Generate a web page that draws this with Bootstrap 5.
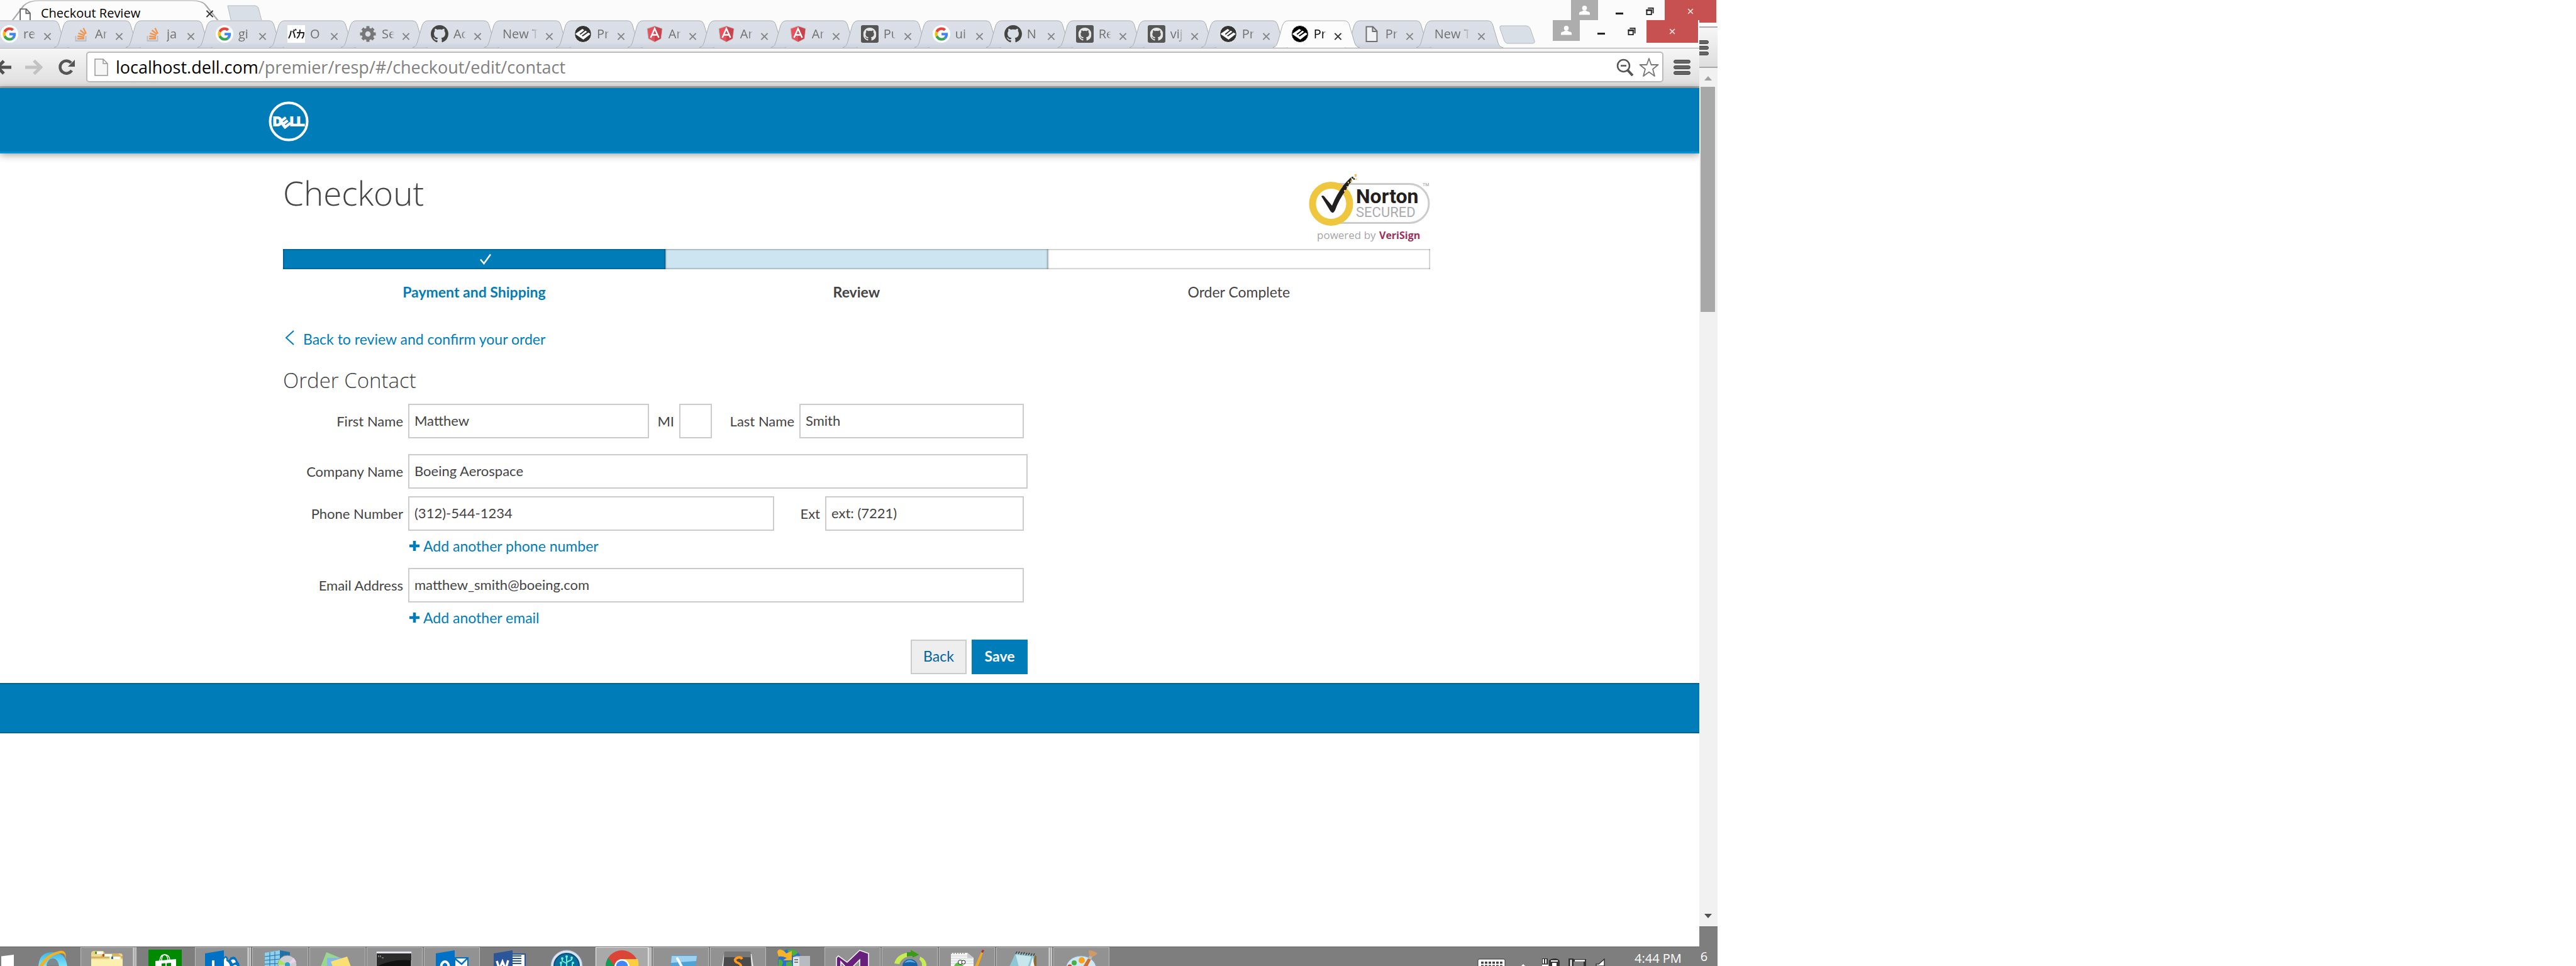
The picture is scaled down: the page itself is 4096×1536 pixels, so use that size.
<!DOCTYPE html>
<html lang="en">
<head>
<meta charset="utf-8">
<meta name="viewport" content="width=device-width, initial-scale=1">
<title>Checkout Review</title>
<link rel="stylesheet" href="https://cdn.jsdelivr.net/npm/bootstrap@5.3.0/dist/css/bootstrap.min.css">
<script src="https://cdn.jsdelivr.net/npm/bootstrap@5.3.0/dist/js/bootstrap.bundle.min.js"></script>
<style>
:root{--dell:#007db8;--ink:#444;--ui:"Open Sans","Noto Sans","Noto Sans CJK JP",sans-serif;--copy:Lato,"Open Sans",sans-serif}
body{background:#fff;color:var(--ink);font-family:var(--copy);font-size:23px;line-height:28px;overflow:hidden}
a{color:var(--dell);text-decoration:none}
svg{display:block;flex:none}
.screen{width:66.67%}
.minw0{min-width:0}
.chrome{font-family:var(--ui);font-size:20px;line-height:28px;color:#000;background:#fbfbfb}
.strip-outer{height:32px;overflow:hidden}
.strip-inner{height:44px}
.tabset{width:88.6%;margin-left:-14px;z-index:0}
.ctab{flex:1 1 0;height:44px;padding:8px 0 0 15px;color:#707070;z-index:0}
.ctab .shape{position:absolute;left:-14px;top:0;width:calc(100% + 24px);height:44px;z-index:-1;fill:url(#tabgrey);stroke:#a9abae}
.ctab.current{color:#000;z-index:2}
.ctab.current .shape{fill:#fcfcfc}
.ctab .label{width:20px;overflow:hidden;white-space:nowrap;margin-left:8px;-webkit-mask-image:linear-gradient(90deg,#000 70%,transparent)}
.ctab .label.wide{width:56px;-webkit-mask-image:linear-gradient(90deg,#000 80%,transparent);margin-left:0}
.ctab .label.full{width:250px;margin-left:12px;-webkit-mask-image:none}
.wbtn,.xbtn{border:0;background:none;padding:0;color:inherit}
.xbtn{margin-left:12px}
.outertab{flex:0 0 350px;margin-left:11px;padding:7px 0 0 16px}
.winctl .person{width:43px;height:33px;background:#adadad;padding:6px 12px}
.winctl .mini{margin-left:28px;padding-top:20px}
.winctl .rest{margin:0 17px 0 36px;padding-top:12px}
.winctl .shut{width:82px;height:36px;background:#c75050;color:#fff;padding:13px 36px;margin-right:2px}
.toolbar{height:64px;background:linear-gradient(#f6f6f6,#dedede);border-top:1px solid #a0a0a0;border-bottom:3px solid #a8a8a8;padding:5px 14px 6px 0}
.omni{height:49px;background:#fff;border:2px solid #bbb;border-radius:5px;padding:0 5px 0 11px;font-size:27px}
.omni .host{color:#000}
.omni .path{color:#808080}
.masthead{height:104px;background:var(--dell);border-bottom:3px solid #0090d4;box-shadow:0 2px 12px rgba(0,0,0,.4);padding:4px 0 0 427px}
.sheet{padding:33px 428px 14px 450px}
.headline{font-family:"Open Sans",sans-serif;font-size:53px;line-height:60px;font-weight:300}
.titlebar{height:119px}
.stepbar{height:32px;box-shadow:inset 0 0 3px rgba(0,0,0,.65)}
.step-done{background:var(--dell);padding-left:36px}
.step-now{background:#cce5f1}
.steplabels{margin-top:22px}
.order-form{max-width:1184px}
.backlink{margin-top:47px}
.subhead{font-family:"Open Sans",sans-serif;font-size:33px;line-height:40px;font-weight:300;margin:32px 0 17px}
.lab{flex:0 0 199px;text-align:right;padding-right:8px;white-space:nowrap;font-size:22px}
.lab-mi{flex-basis:48px}
.lab-last{flex-basis:139px}
.lab-ext{flex-basis:81px}
.form-control.field{height:55px;border:2px solid #ccc;border-radius:0;padding:0 8px 2px;font-size:22px;color:var(--ink);font-family:inherit}
.w-first{flex:0 0 383px}
.w-mi{flex:0 0 52px}
.w-phone{flex:0 0 582px}
.narrow{padding-right:6px}
.under{padding:10px 0 0 201px;margin-bottom:21px}
.under a{gap:6px}
.gap-company{margin:25px 0 12px}
.btn.act{width:89px;height:55px;border-radius:0;padding:0 0 3px;font-size:23px;line-height:28px}
.btn.act-back{background:#eee;border:2px solid #ccc;color:#00639a}
.btn.act-save{background:var(--dell);color:#fff;border:0;font-weight:700}
.footband{height:80px;background:var(--dell);border-top:2px solid #00608e;border-bottom:2px solid #00608e}
.taskbar{height:31px;background:#7e7e7e;border-top:1px solid #666;overflow:hidden;color:#fff;font-family:var(--ui);font-size:20px;line-height:28px;gap:2px}
.task{flex:0 0 89px;height:34px}
.task.open{background:#929292;box-shadow:inset 0 0 0 1px #b9b9b9}
.task.many{border-right:5px double #c8c8c8}
.task.front{background:#a9a9a9;box-shadow:inset 0 0 0 1px #eee}
.clock{margin:4px 28px 0 44px}
.sidestrip{flex:0 0 29px;background:#f1f1f1}
.side-gap{height:6px;background:#fbfbfb}
.side-red{height:4px;margin-right:2px;background:#c75050}
.side-tool{height:66px;background:linear-gradient(#f6f6f6,#dedede);border-top:2px solid #aaa;border-bottom:2px solid #a8a8a8;padding-top:20px;overflow:hidden}
.side-up{height:30px;padding:13px 0 0 8px}
.side-down{padding:0 0 13px 8px}
.thumb{height:358px;margin:0 4px 0 2px;background:#a8a8a8}
.side-task{height:63px;background:#7e7e7e;border-top:1px solid #666;color:#fff;font-family:var(--ui);font-size:20px;line-height:28px;padding:33px 0 0 2px}
</style>
</head>
<body>
<svg width="0" height="0" class="position-absolute" aria-hidden="true">
<defs>
<linearGradient id="tabgrey" x1="0" y1="0" x2="0" y2="1"><stop offset="0" stop-color="#dbe0e8"/><stop offset=".8" stop-color="#dadfe7"/><stop offset="1" stop-color="#ccd2de"/></linearGradient>
<linearGradient id="folder" x1="0" y1="0" x2="0" y2="1"><stop offset="0" stop-color="#e8d088"/><stop offset="1" stop-color="#fbf3b8"/></linearGradient>
<linearGradient id="ieblue" x1="0" y1="0" x2="0" y2="1"><stop offset="0" stop-color="#3fb4e6"/><stop offset="1" stop-color="#7fe6fb"/></linearGradient>
<symbol id="tab" viewBox="0 0 138 44" preserveAspectRatio="none"><path d="M0 43.500C5 42 6 40 8 34L15 9Q18 1 24 1H114Q120 1 122 9L130 36Q132 43 138 43.500"/></symbol>
<symbol id="cross" viewBox="0 0 14 14"><path d="M1.500 1.500L12.500 12.500M12.500 1.500L1.500 12.500" stroke="currentColor" stroke-width="2.200" opacity=".8"/></symbol>
<symbol id="goog" viewBox="0 0 28 28"><circle cx="14" cy="14" r="14" fill="#fff"/><g transform="translate(3.500 3.500) scale(.44)"><path fill="#EA4335" d="M24 9.500c3.540 0 6.710 1.220 9.210 3.600l6.850-6.850C35.900 2.380 30.470 0 24 0 14.620 0 6.510 5.380 2.560 13.220l7.980 6.190C12.430 13.720 17.740 9.500 24 9.500z"/><path fill="#4285F4" d="M46.980 24.550c0-1.570-.15-3.090-.38-4.550H24v9.020h12.940c-.58 2.960-2.260 5.480-4.780 7.180l7.730 6c4.510-4.180 7.090-10.360 7.090-17.650z"/><path fill="#FBBC05" d="M10.530 28.590c-.48-1.450-.76-2.990-.76-4.590s.27-3.140.76-4.590l-7.980-6.190C.92 16.460 0 20.120 0 24c0 3.880.92 7.540 2.560 10.780l7.970-6.190z"/><path fill="#34A853" d="M24 48c6.480 0 11.930-2.130 15.890-5.810l-7.730-6c-2.150 1.450-4.920 2.300-8.160 2.300-6.260 0-11.570-4.220-13.470-9.910l-7.980 6.190C6.510 42.620 14.620 48 24 48z"/></g></symbol>
<symbol id="stack" viewBox="0 0 28 28"><path d="M5.500 17V25H21.500V17" fill="none" stroke="#babec4" stroke-width="2"/><path d="M8 21.500H19M8.300 17.500L19 19M9.500 12.800L19.500 16.400M12.500 8L20.500 14.400M17.500 4.500L22 13.500" stroke="#f0944d" stroke-width="2.300"/></symbol>
<symbol id="gear" viewBox="0 0 28 28"><circle cx="14" cy="14" r="7" fill="none" stroke="#777" stroke-width="5.500"/><path d="M14 1.500V6M14 22V26.500M1.500 14H6M22 14H26.500M5.200 5.200L8.400 8.400M19.600 19.600L22.800 22.800M22.800 5.200L19.600 8.400M8.400 19.600L5.200 22.800" stroke="#777" stroke-width="5"/></symbol>
<symbol id="octo" viewBox="0 0 16 16"><path d="M8 0C3.580 0 0 3.580 0 8c0 3.540 2.290 6.530 5.470 7.590.4.070.55-.17.55-.38 0-.19-.01-.82-.01-1.490-2.010.37-2.530-.49-2.690-.94-.09-.23-.48-.94-.82-1.130-.28-.15-.68-.52-.01-.53.63-.01 1.080.58 1.230.82.72 1.210 1.870.87 2.330.66.07-.52.28-.87.51-1.070-1.780-.2-3.640-.89-3.640-3.950 0-.87.31-1.590.82-2.150-.08-.2-.36-1.020.08-2.120 0 0 .67-.21 2.200.82.64-.18 1.320-.27 2-.27.68 0 1.360.09 2 .27 1.530-1.040 2.200-.82 2.200-.82.44 1.100.16 1.920.08 2.120.51.56.82 1.270.82 2.150 0 3.070-1.870 3.750-3.650 3.950.29.25.54.73.54 1.480 0 1.070-.01 1.930-.01 2.200 0 .21.15.46.55.38A8.010 8.010 0 0 0 16 8c0-4.420-3.580-8-8-8z" fill="currentColor"/></symbol>
<symbol id="octosq" viewBox="0 0 28 28"><rect width="28" height="28" rx="3" fill="#555"/><svg x="3.500" y="4" width="21" height="21" color="#e6e6e6"><use href="#octo"/></svg></symbol>
<symbol id="ediam" viewBox="0 0 28 28"><circle cx="14" cy="14" r="13.500" fill="currentColor" stroke="#fff"/><path d="M1.500 14L13 6L16 8L8.500 14L10 15.200L18 8.800L20.500 10.500L12 16.800L13.500 18L22.500 11.800L26 14L14.500 23Z" fill="#fff"/></symbol>
<symbol id="ang" viewBox="0 0 28 28"><path d="M14 1.500L26 5.500L24 21.500L14 26.800L4 21.500L2 5.500Z" fill="#e8505b" stroke="#bbb"/><path d="M14 2V26.300L23.600 21.200L25.400 6Z" fill="#c9434d"/><path d="M7.500 20L14 5.500L20.500 20M10 15.500H18" fill="none" stroke="#fff" stroke-width="2.400"/></symbol>
<symbol id="page" viewBox="0 0 28 28"><path d="M5.500 2.500H16L22.500 9.500V26H5.500ZM15.500 3V10H22" fill="#fff" fill-opacity=".6" stroke="currentColor" stroke-width="2"/></symbol>
<symbol id="user" viewBox="0 0 20 16" preserveAspectRatio="none"><circle cx="10" cy="4" r="4" fill="#fff"/><path d="M1 15.500V12Q2 10 6 9.500L8 8H12L14 9.500Q18 10 19 12V15.500Z" fill="#fff"/></symbol>
<symbol id="bars" viewBox="0 0 27 24"><g fill="#666" stroke="#444"><rect x=".5" y=".5" width="26" height="5" rx="2.500"/><rect x=".5" y="9.500" width="26" height="5" rx="2.500"/><rect x=".5" y="18.500" width="26" height="5" rx="2.500"/></g></symbol>
<symbol id="restore" viewBox="0 0 13 13"><path d="M3 0H13V10H11V2H3Z" fill="#222"/><path d="M1 4.500H9V12H1Z" fill="none" stroke="#222" stroke-width="2"/><path d="M0 3H10V6H0Z" fill="#222"/></symbol>
<symbol id="plus" viewBox="0 0 16 16"><path d="M8 0V16M0 8H16" stroke="#007db8" stroke-width="4.500"/></symbol>
</defs>
</svg>

<div class="screen vh-100 d-flex flex-column">
  <header class="chrome strip-outer d-flex">
    <div class="ctab current outertab position-relative d-flex align-items-start">
      <svg class="shape"><use href="#tab"/></svg>
      <svg width="26" height="28" color="#666" class="mt-1"><use href="#page"/></svg>
      <span class="label full">Checkout Review</span>
      <button class="xbtn ms-2 ps-1" aria-label="Close tab"><svg width="13" height="30"><use href="#cross"/></svg></button>
    </div>
    <svg width="57" height="32" class="mt-2"><path d="M1 1H45Q49 2 50 5L57 32H11Q8 31 7 27Z" fill="#d9dfe7" stroke="#b5b8bc"/></svg>
    <div class="winctl ms-auto d-flex align-items-start">
      <button class="wbtn person" aria-label="Profile"><svg width="19" height="15"><use href="#user"/></svg></button>
      <button class="wbtn mini" aria-label="Minimize"><svg width="12" height="3"><path d="M0 0H12V3H0Z" fill="#222"/></svg></button>
      <button class="wbtn rest" aria-label="Restore"><svg width="13" height="12"><use href="#restore"/></svg></button>
      <button class="wbtn shut" aria-label="Close"><svg width="10" height="10"><use href="#cross"/></svg></button>
    </div>
  </header>

  <div class="d-flex flex-grow-1">
    <div class="flex-grow-1 minw0 d-flex flex-column">
      <div class="chrome strip-inner d-flex position-relative">
        <nav class="tabset d-flex position-relative" aria-label="Tabs">
          <div class="ctab position-relative d-flex"><svg class="shape"><use href="#tab"/></svg><svg width="28" height="28"><use href="#goog"/></svg><span class="label">re</span><button class="xbtn" aria-label="Close tab"><svg width="13" height="14"><use href="#cross"/></svg></button></div>
          <div class="ctab position-relative d-flex"><svg class="shape"><use href="#tab"/></svg><svg width="28" height="28"><use href="#stack"/></svg><span class="label">An</span><button class="xbtn" aria-label="Close tab"><svg width="13" height="14"><use href="#cross"/></svg></button></div>
          <div class="ctab position-relative d-flex"><svg class="shape"><use href="#tab"/></svg><svg width="28" height="28"><use href="#stack"/></svg><span class="label">ja</span><button class="xbtn" aria-label="Close tab"><svg width="13" height="14"><use href="#cross"/></svg></button></div>
          <div class="ctab position-relative d-flex"><svg class="shape"><use href="#tab"/></svg><svg width="28" height="28"><use href="#goog"/></svg><span class="label">gi</span><button class="xbtn" aria-label="Close tab"><svg width="13" height="14"><use href="#cross"/></svg></button></div>
          <div class="ctab position-relative d-flex"><svg class="shape"><use href="#tab"/></svg><svg width="28" height="28" viewBox="0 0 28 28"><rect width="28" height="28" fill="#fff"/><path d="M6 9Q5 16 2 21M8.500 9Q11 13 12 20M10 7L11.500 9.500M12.500 6L14 8.500M15 12H26Q26 18 23 21M20 7Q20 17 15 21" fill="none" stroke="#222" stroke-width="2"/></svg><span class="label">O</span><button class="xbtn" aria-label="Close tab"><svg width="13" height="14"><use href="#cross"/></svg></button></div>
          <div class="ctab position-relative d-flex"><svg class="shape"><use href="#tab"/></svg><svg width="28" height="28"><use href="#gear"/></svg><span class="label">Se</span><button class="xbtn" aria-label="Close tab"><svg width="13" height="14"><use href="#cross"/></svg></button></div>
          <div class="ctab position-relative d-flex"><svg class="shape"><use href="#tab"/></svg><svg width="28" height="28" color="#444"><use href="#octo"/></svg><span class="label">Ac</span><button class="xbtn" aria-label="Close tab"><svg width="13" height="14"><use href="#cross"/></svg></button></div>
          <div class="ctab position-relative d-flex"><svg class="shape"><use href="#tab"/></svg><span class="label wide">New T</span><button class="xbtn" aria-label="Close tab"><svg width="13" height="14"><use href="#cross"/></svg></button></div>
          <div class="ctab position-relative d-flex"><svg class="shape"><use href="#tab"/></svg><svg width="28" height="28" color="#333"><use href="#ediam"/></svg><span class="label">Pr</span><button class="xbtn" aria-label="Close tab"><svg width="13" height="14"><use href="#cross"/></svg></button></div>
          <div class="ctab position-relative d-flex"><svg class="shape"><use href="#tab"/></svg><svg width="28" height="28"><use href="#ang"/></svg><span class="label">An</span><button class="xbtn" aria-label="Close tab"><svg width="13" height="14"><use href="#cross"/></svg></button></div>
          <div class="ctab position-relative d-flex"><svg class="shape"><use href="#tab"/></svg><svg width="28" height="28"><use href="#ang"/></svg><span class="label">An</span><button class="xbtn" aria-label="Close tab"><svg width="13" height="14"><use href="#cross"/></svg></button></div>
          <div class="ctab position-relative d-flex"><svg class="shape"><use href="#tab"/></svg><svg width="28" height="28"><use href="#ang"/></svg><span class="label">An</span><button class="xbtn" aria-label="Close tab"><svg width="13" height="14"><use href="#cross"/></svg></button></div>
          <div class="ctab position-relative d-flex"><svg class="shape"><use href="#tab"/></svg><svg width="28" height="28"><use href="#octosq"/></svg><span class="label">Pu</span><button class="xbtn" aria-label="Close tab"><svg width="13" height="14"><use href="#cross"/></svg></button></div>
          <div class="ctab position-relative d-flex"><svg class="shape"><use href="#tab"/></svg><svg width="28" height="28"><use href="#goog"/></svg><span class="label">ui</span><button class="xbtn" aria-label="Close tab"><svg width="13" height="14"><use href="#cross"/></svg></button></div>
          <div class="ctab position-relative d-flex"><svg class="shape"><use href="#tab"/></svg><svg width="28" height="28" color="#444"><use href="#octo"/></svg><span class="label">N</span><button class="xbtn" aria-label="Close tab"><svg width="13" height="14"><use href="#cross"/></svg></button></div>
          <div class="ctab position-relative d-flex"><svg class="shape"><use href="#tab"/></svg><svg width="28" height="28"><use href="#octosq"/></svg><span class="label">Re</span><button class="xbtn" aria-label="Close tab"><svg width="13" height="14"><use href="#cross"/></svg></button></div>
          <div class="ctab position-relative d-flex"><svg class="shape"><use href="#tab"/></svg><svg width="28" height="28"><use href="#octosq"/></svg><span class="label">vij</span><button class="xbtn" aria-label="Close tab"><svg width="13" height="14"><use href="#cross"/></svg></button></div>
          <div class="ctab position-relative d-flex"><svg class="shape"><use href="#tab"/></svg><svg width="28" height="28" color="#333"><use href="#ediam"/></svg><span class="label">Pr</span><button class="xbtn" aria-label="Close tab"><svg width="13" height="14"><use href="#cross"/></svg></button></div>
          <div class="ctab current position-relative d-flex"><svg class="shape"><use href="#tab"/></svg><svg width="28" height="28" color="#000"><use href="#ediam"/></svg><span class="label">Pr</span><button class="xbtn" aria-label="Close tab"><svg width="13" height="14"><use href="#cross"/></svg></button></div>
          <div class="ctab position-relative d-flex"><svg class="shape"><use href="#tab"/></svg><svg width="28" height="28"><use href="#page"/></svg><span class="label">Pr</span><button class="xbtn" aria-label="Close tab"><svg width="13" height="14"><use href="#cross"/></svg></button></div>
          <div class="ctab position-relative d-flex"><svg class="shape"><use href="#tab"/></svg><span class="label wide">New T</span><button class="xbtn" aria-label="Close tab"><svg width="13" height="14"><use href="#cross"/></svg></button></div>
        </nav>
        <svg width="57" height="30" class="mt-2 ms-1"><path d="M3 1H43Q48 2 49 5L56 25Q57 29 53 29H13Q9 28 8 25L1 5Q0 1 3 1Z" fill="#d9dfe7" stroke="#b5b8bc"/></svg>
        <div class="winctl ms-auto d-flex align-items-start">
          <button class="wbtn person" aria-label="Profile"><svg width="19" height="15"><use href="#user"/></svg></button>
          <button class="wbtn mini" aria-label="Minimize"><svg width="12" height="3"><path d="M0 0H12V3H0Z" fill="#222"/></svg></button>
          <button class="wbtn rest" aria-label="Restore"><svg width="13" height="12"><use href="#restore"/></svg></button>
          <button class="wbtn shut" aria-label="Close"><svg width="10" height="10"><use href="#cross"/></svg></button>
        </div>
      </div>

      <div class="chrome toolbar d-flex align-items-center">
        <button class="wbtn" aria-label="Back"><svg width="20" height="26" viewBox="0 0 20 26"><path d="M0 13H18M-4 13L6 3M-4 13L6 23" fill="none" stroke="#505050" stroke-width="5"/></svg></button>
        <button class="wbtn ms-3 ps-1" aria-label="Forward"><svg width="28" height="26" viewBox="0 0 28 26"><path d="M0 13H24M14 2.500L25 13L14 23.500" fill="none" stroke="#c2c2c2" stroke-width="5"/></svg></button>
        <button class="wbtn ms-4" aria-label="Reload"><svg width="29" height="26" viewBox="0 0 29 26"><path d="M22 18A10 10 0 1 1 21 6" fill="none" stroke="#555" stroke-width="4.500"/><path d="M27 1V12H16Z" fill="#555"/></svg></button>
        <div class="omni d-flex align-items-center flex-grow-1 ms-3 me-3">
          <svg width="22" height="28" viewBox="0 0 22 28"><path d="M1 1H14L21 8V27H1ZM14 1V8H21" fill="#f6f6f6" stroke="#999" stroke-width="1.500"/></svg>
          <a class="ms-2 ps-1 flex-grow-1" href="#"><span class="host">localhost.dell.com</span><span class="path">/premier/resp/#/checkout/edit/contact</span></a>
          <svg width="28" height="28" viewBox="0 0 28 28"><circle cx="11.500" cy="11.500" r="9.500" fill="none" stroke="#555" stroke-width="2.500"/><path d="M7 11.500H16" stroke="#555" stroke-width="2.500"/><path d="M18 18.500L26 27" stroke="#555" stroke-width="4"/></svg>
          <svg width="32" height="32" viewBox="0 0 32 32" class="ms-2"><path d="M16 2L19.500 12H30.500L22 19L25 30L16 23.500L7 30L10 19L1.500 12H12.500Z" fill="#fff" stroke="#777" stroke-width="1.800" stroke-linejoin="round"/></svg>
        </div>
        <button class="wbtn" aria-label="Menu"><svg width="27" height="24"><use href="#bars"/></svg></button>
      </div>

      <div class="masthead d-flex align-items-center">
        <svg width="64" height="64" viewBox="0 0 64 64" role="img" aria-label="Dell"><circle cx="32" cy="32" r="29.500" fill="none" stroke="#fff" stroke-width="4"/><g fill="#fff" stroke="#fff" stroke-width="1.800" font-family="Liberation Sans,sans-serif" font-weight="700" font-size="20"><text x="7" y="39">D</text><text x="19" y="41" transform="rotate(-38 26 34)">E</text><text x="34" y="39">L</text><text x="45" y="39">L</text></g></svg>
      </div>

      <main class="sheet">
        <div class="titlebar d-flex justify-content-between align-items-start">
          <h1 class="headline m-0">Checkout</h1>
          <svg width="193" height="110" viewBox="0 0 193 110" role="img" aria-label="Norton Secured, powered by VeriSign">
            <path d="M40 15.500H160A31 31 0 0 1 160 77.500H40" fill="#fff" stroke="#ccc" stroke-width="3"/>
            <circle cx="35.500" cy="47" r="29.500" fill="#fff" stroke="#efc73f" stroke-width="11"/>
            <path d="M20 35Q23 32 26 37L37 50Q44 32 56 17L60 24Q48 40 42 57Q38 65 34 58Z" fill="#221f20"/>
            <path d="M54 19L61 11L64 17L58 26ZM61 11L67 5L68 12L64 16Z" fill="#221f20"/>
            <path d="M56 28h3v-3h-3zM60 21h2v-2h-2zM66 12h3v-3h-3zM62 14h2v-2h-2z" fill="#efc73f"/><path d="M68 4h3v3h-3zM71 6h2v3h-2zM66 8h2v2h-2z" fill="#333"/><path d="M73 0h3v4h-3zM74 7h2v2h-2z" fill="#efc73f"/>
            <g font-family="Roboto,sans-serif"><text x="75" y="46" font-size="32" font-weight="700" fill="#231f20">Norton</text><text x="75" y="68" font-size="22" fill="#a9abae">SECURED</text><text x="181" y="19" font-size="7" fill="#999">TM</text></g>
            <g font-family="Open Sans,sans-serif" font-size="17"><text x="13" y="103" fill="#a5a5a8">powered by</text><text x="112" y="103" font-weight="700" fill="#9e2f5b" font-size="16">VeriSign</text></g>
          </svg>
        </div>
        <div class="row g-0">
          <div class="col"><div class="stepbar step-done d-flex align-items-center justify-content-center"><svg width="18" height="18" viewBox="0 0 18 18"><path d="M1 9.500L6.500 16L17 1.500" fill="none" stroke="#fff" stroke-width="2.500"/></svg></div></div>
          <div class="col"><div class="stepbar step-now"></div></div>
          <div class="col"><div class="stepbar"></div></div>
        </div>
        <div class="row g-0 text-center steplabels">
          <div class="col"><a href="#" class="fw-bold">Payment and Shipping</a></div>
          <div class="col fw-bold">Review</div>
          <div class="col">Order Complete</div>
        </div>
        <form class="order-form">
          <div class="d-flex backlink"><a href="#" class="d-flex"><svg width="32" height="26" viewBox="0 0 32 26"><path d="M17 1L5 12L17 23" fill="none" stroke="#007db8" stroke-width="2"/></svg>Back to review and confirm your order</a></div>
          <h2 class="subhead">Order Contact</h2>
          <div class="d-flex align-items-center narrow">
            <label class="lab" for="fn">First Name</label><input id="fn" class="form-control field w-first" value="Matthew">
            <label class="lab lab-mi" for="mi">MI</label><input id="mi" class="form-control field w-mi">
            <label class="lab lab-last" for="ln">Last Name</label><input id="ln" class="form-control field flex-fill" value="Smith">
          </div>
          <div class="d-flex align-items-center gap-company">
            <label class="lab" for="co">Company Name</label><input id="co" class="form-control field flex-fill" value="Boeing Aerospace">
          </div>
          <div class="d-flex align-items-center narrow">
            <label class="lab" for="ph">Phone Number</label><input id="ph" class="form-control field w-phone" value="(312)-544-1234">
            <label class="lab lab-ext" for="ex">Ext</label><input id="ex" class="form-control field flex-fill" value="ext: (7221)">
          </div>
          <div class="under d-flex"><a href="#" class="d-flex align-items-center"><svg width="16" height="16"><use href="#plus"/></svg>Add another phone number</a></div>
          <div class="d-flex align-items-center narrow">
            <label class="lab" for="em">Email Address</label><input id="em" type="email" class="form-control field flex-fill" value="matthew_smith@boeing.com">
          </div>
          <div class="under d-flex"><a href="#" class="d-flex align-items-center"><svg width="16" height="16"><use href="#plus"/></svg>Add another email</a></div>
          <div class="d-flex justify-content-end gap-2">
            <button type="button" class="btn act act-back">Back</button>
            <button type="button" class="btn act act-save">Save</button>
          </div>
        </form>
      </main>
      <footer class="footband"></footer>

      <div class="taskbar d-flex mt-auto">
        <svg width="35" height="31"><path d="M2 14.500L22 12V31H2Z" fill="#fff"/></svg>
        <div class="task"><svg width="89" height="31"><path d="M24 31Q25 8 46 8Q68 8 70 31H57Q55 18 47 18Q38 19 37 31Z" fill="url(#ieblue)"/><path d="M37 29Q39 19 47 19Q54 19 56 29Z" fill="#7c8a90"/><path d="M25 31Q36 10 58 6Q70 4 67 20Q68 8 58 10Q40 14 31 31Z" fill="#f6b11e"/></svg></div>
        <div class="task open many"><svg width="84" height="31"><path d="M17 31V10Q17 6 22 6H34Q38 6 38 10H63Q67 10 67 14V31Z" fill="url(#folder)"/><path d="M17 15H32L36 10H60L64 14H67V18H17Z" fill="#d7b45d"/><path d="M17 20H46V15H64V20H67V31H17Z" fill="#fbf0ae"/><path d="M24 7H36V11H24ZM35 11H50V15H35ZM50 15H62V19H50Z" fill="#fff"/><path d="M23 7H26V11H23Z" fill="#4c9c2e"/><path d="M35 11H38V15H35Z" fill="#d0451b"/><path d="M49 15H52V19H49Z" fill="#2a6fb5"/></svg></div>
        <div class="task"><svg width="89" height="31"><path d="M17 4H70V31H17Z" fill="#008a00"/><path d="M28 22L61 19V31H28Z" fill="#fff"/><path d="M35 22Q36 12 42 12Q47 12 48 20M38 22Q38 12 43 12Q50 12 51 20" fill="none" stroke="#fff" stroke-width="1.500"/><path d="M38 26L44 25.500V31H38ZM46 25.500L53 25V31H46Z" fill="#008a00"/></svg></div>
        <div class="task open many"><svg width="84" height="31"><path d="M16 10L46 5V31H16Z" fill="#0072c6"/><path d="M27 21H31V31H27Z" fill="#fff"/><path d="M46 31V16Q49 12 52 17Q53 20 51 21Q56 20 56 17Q64 12 67 21Q71 26 71 31Z" fill="#0072c6"/><path d="M46 20Q49 14 50 19V22Q55 24 56 31H46ZM57 21Q63 17 65 24L60 26ZM60 30Q65 26 68 31H60Z" fill="#fff"/></svg></div>
        <div class="task open"><svg width="89" height="31"><path d="M20 9L44 5V31H20Z" fill="#8fd0ee"/><path d="M44 5L60 8V31H44Z" fill="#2372a8"/><path d="M20 15L44 12M20 21L44 19M20 27L44 26M28 8V31M36 7V31M48 6V31M54 7V31" stroke="#1f6da3"/><ellipse cx="56" cy="28" rx="15" ry="15" fill="#cdcdd2" stroke="#8a8a8a"/><path d="M56 28L43 20L41 28Z" fill="#a9e35c"/><path d="M56 28L66 17L70 23Z" fill="#ecd2ec"/><circle cx="56" cy="28" r="4" fill="#2aa0c8"/></svg></div>
        <div class="task open"><svg width="89" height="31"><path d="M18 31L27 8L51 18V31Z" fill="#9bd691"/><path d="M28 17H50V31H28Z" fill="#83b7ee"/><path d="M37 31L34 23L60 15L66 31Z" fill="#fadf72"/></svg></div>
        <div class="task open"><svg width="89" height="31"><path d="M16 7.500H71V31H16Z" fill="#111" stroke="#ccc"/><path d="M16 7H71V10H16Z" fill="#e6e6ee"/><path d="M16 31Q40 18 71 21V10H16Z" fill="#2c2c2c"/><path d="M19 13V16M22 13V16M24 17H27" stroke="#bbb"/></svg></div>
        <div class="task open"><svg width="89" height="31"><path d="M49 17H70V31H49Z" fill="#fff" stroke="#0072c6" stroke-width="2"/><path d="M49 18L60 27L70 17" fill="none" stroke="#0072c6" stroke-width="2.500"/><path d="M19 10L49 5V31H19Z" fill="#0072c6"/><ellipse cx="33.500" cy="31" rx="6" ry="8" fill="none" stroke="#fff" stroke-width="4"/></svg></div>
        <div class="task"><svg width="89" height="31"><path d="M49 11H70V31H49Z" fill="#fff" stroke="#2b579a" stroke-width="2"/><path d="M50 14H64M50 18H64M50 22H64M50 26H64" stroke="#2b579a" stroke-width="2"/><path d="M20 10L50 5V31H20Z" fill="#2b579a"/><path d="M25 22L29 35L34 23L39 35L43 21" fill="none" stroke="#fff" stroke-width="3.500"/></svg></div>
        <div class="task"><svg width="89" height="31"><circle cx="45" cy="30" r="25" fill="#dbe2f2" stroke="#a7b6d2"/><circle cx="45" cy="30" r="20" fill="#0a6d9c" stroke="#0a4f7c" stroke-width="2"/><path d="M45 31V16M45 26L38 22V19M45 24L53 20V17M36 31V26M54 31V26" fill="none" stroke="#69f0cf" stroke-width="2"/><g fill="#69f0cf"><circle cx="45" cy="15" r="2"/><circle cx="38" cy="18" r="2"/><circle cx="53" cy="17" r="2"/><circle cx="36" cy="25" r="2"/><circle cx="55" cy="25" r="2"/></g></svg></div>
        <div class="task open front many"><svg width="84" height="31"><circle cx="42" cy="31" r="26" fill="#db4437"/><path d="M42 19H67Q69 25 68 31H42Z" fill="#ffcd40"/><path d="M20 17L31 31H16Q16 23 20 17Z" fill="#0f9d58"/><circle cx="42" cy="31" r="12" fill="#fff"/><circle cx="42" cy="31" r="9.500" fill="#4285f4"/></svg></div>
        <div class="task open"><svg width="89" height="31"><path d="M30 14Q31 13 33 13H68Q71 13 70 17L67 31H28Z" fill="#4fa3d6"/><path d="M30 14H70L69 22L29 25Z" fill="#9cd2ef"/><path d="M39 18L46 31" stroke="#fff" stroke-width="4" stroke-linecap="round"/></svg></div>
        <div class="task open"><svg width="89" height="31"><path d="M22 11L19 31H69L66 11Z" fill="#e6e6e6"/><path d="M23 7H64L66 31H21Z" fill="#4a4a4a"/><path d="M23 7H64L65 16H22Z" fill="#777"/><path d="M51 19Q49 15 43 17Q37 20 42 24Q50 27 49 31" fill="none" stroke="#ff9a1e" stroke-width="4"/></svg></div>
        <div class="task"><svg width="89" height="31"><ellipse cx="36" cy="24" rx="19" ry="21" fill="#2b6fd0"/><path d="M32 4Q44 2 49 9L42 14L34 10ZM18 20Q22 18 25 24L23 31H18ZM30 24L38 22L40 31H30Z" fill="#4faf3c"/><path d="M16 8Q17 3 22 4Q28 6 30 10L39 6V21H25L31 17Q24 14 18 15Z" fill="#f8b427"/><path d="M41 16L46 14H68V31H41Z" fill="#b8bcc0"/><path d="M41 16H51V31H41Z" fill="#e4e6e8"/><path d="M43 20H49M43 24H49" stroke="#555" stroke-width="1.500"/></svg></div>
        <div class="task open"><svg width="89" height="31"><path d="M19 31V17L22 14L36 24L56 5L70 10V31H56V20L45 31H33L26 23V31Z" fill="#68217a" stroke="#fff" stroke-width="1.500"/></svg></div>
        <div class="task open"><svg width="89" height="31"><path d="M20 26Q24 10 46 8V4L60 12L49 17V14Q32 15 28 27Z" fill="#c6ee52"/><path d="M40 8L46 8V4L60 12L49 17V14L40 15Z" fill="#3c9a1a"/><path d="M61 15L66 18Q72 24 71 31H64Q65 24 60 20Z" fill="#c6ee52"/><ellipse cx="45" cy="30" rx="12" ry="11" fill="#1a62a8"/><path d="M36 25Q44 16 54 25Q45 22 36 25Z" fill="#5ab0e8"/></svg></div>
        <div class="task open"><svg width="89" height="31"><path d="M19 9H45L55 17V31H19Z" fill="#f7f7f2"/><path d="M19 14H46M19 18H54M19 22H55M19 26H55" stroke="#c7cfe2"/><path d="M20 9V11M24 9V11M28 9V11M32 9V11M36 9V11M40 9V11" stroke="#555"/><path d="M45 9V17H55Z" fill="#ccc"/><path d="M24 31Q25 24 34 24L40 31Z" fill="#5cc04a"/><circle cx="34" cy="24" r="3.500" fill="#fff" stroke="#222"/><circle cx="39" cy="24" r="3" fill="#fff" stroke="#222"/><path d="M57 31L67 8L70 9L62 31Z" fill="#f5a91b"/><path d="M67 8L69 4L72 5L70 9Z" fill="#a33"/></svg></div>
        <div class="task open many"><svg width="84" height="31"><path d="M60 13L64 14V31H58Z" fill="#8c6a2e"/><path d="M21 31L31 9L61 13L58 31Z" fill="#8ec7d3"/><path d="M31 12L56 15L50 31H36Z" fill="#c7e7ec"/><path d="M58 16L61 31H54Z" fill="#f4f4f4"/><path d="M31 11L33 7M35 11L37 7M39 12L41 8M43 12L45 8M47 13L49 9M51 13L53 9M55 14L57 10M59 14L61 10" stroke="#3c3c3c" stroke-width="1.500"/></svg></div>
        <div class="task open"><svg width="89" height="31"><ellipse cx="44" cy="34" rx="24" ry="20" fill="#cfe6f3" stroke="#88a9bd"/><circle cx="33" cy="25" r="4" fill="#48b048"/><circle cx="45" cy="21" r="5" fill="#f9a21b"/><circle cx="26" cy="31" r="3.500" fill="#df3b31"/><path d="M55 18L60 19L54 31H47Z" fill="#d0702a"/><path d="M57 14L62 15L60 20L55 18Z" fill="#bbb"/><path d="M56 5Q64 5 70 10Q67 14 62 15L57 14Z" fill="#cf9a68"/></svg></div>
        <svg width="204" height="12" viewBox="0 0 204 12" class="ms-auto mt-auto"><path d="M1 12V3Q1 1 3 1H42Q44 1 44 3V12" fill="#fff" stroke="#333"/><path d="M6 5H40V12H6Z" fill="#444"/><path d="M11 5V12M17 5V12M23 5V12M29 5V12M35 5V12M6 9.500H40" stroke="#fff" stroke-width="2"/><path d="M70 12L73 9L76 12Z" fill="#fff"/><path d="M103 0H112V9H103ZM114 3Q117 0 124 0Q131 1 131 5V12H114Z" fill="#333"/><path d="M105 1V8M109 1V8M103 11H113M117 4H128" stroke="#fff" stroke-width="2"/><path d="M119 7H126V12H119Z" fill="#fff"/><path d="M145 0H153V12H145ZM153 1H173V12H169V5H153Z" fill="#333"/><path d="M149 2V12M155 3.500H171" stroke="#fff" stroke-width="2.500"/><path d="M189 12V9H193L202 1V12Z" fill="#fff" stroke="#333" stroke-width="1.500"/></svg>
        <span class="clock text-nowrap">4:44 PM</span>
      </div>
    </div>

    <aside class="sidestrip d-flex flex-column">
      <div class="side-red"></div>
      <div class="side-gap"></div>
      <div class="side-tool"><svg width="15" height="24" viewBox="12 0 15 24"><g fill="#666" stroke="#444"><rect x="-.5" y=".5" width="27" height="5" rx="2.500"/><rect x="-.5" y="9.500" width="27" height="5" rx="2.500"/><rect x="-.5" y="18.500" width="27" height="5" rx="2.500"/></g></svg></div>
      <div class="side-up"><svg width="12" height="7"><path d="M0 7L6 0L12 7Z" fill="#a0a0a0"/></svg></div>
      <div class="thumb"></div>
      <div class="side-down mt-auto"><svg width="12" height="7"><path d="M0 0L6 7L12 0Z" fill="#505050"/></svg></div>
      <div class="side-task">6</div>
    </aside>
  </div>
</div>
</body>
</html>
